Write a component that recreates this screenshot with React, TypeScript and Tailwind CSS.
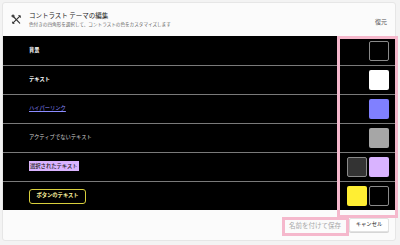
import React from "react";

type Row = {
  key: string;
  swatches: { bg: string; border?: boolean }[];
  label: React.ReactNode;
};

const font = {
  fontFamily: '"Noto Sans CJK JP", "Noto Sans", sans-serif',
};

function PaletteIcon() {
  return (
    <svg width="11" height="11" viewBox="0 0 12 12" fill="none" stroke="#333" strokeWidth="1.2" strokeLinecap="round">
      <path d="M2.8 3 L9.5 10" />
      <circle cx="2.2" cy="2.2" r="1.1" />
      <path d="M10 2 L2 10" />
      <path d="M8.6 1.6 L10.4 3.4" />
      <path d="M1.6 8.8 L3.2 10.4" />
    </svg>
  );
}

const rows: Row[] = [
  {
    key: "bg",
    swatches: [{ bg: "bg-black", border: true }],
    label: <span className="font-bold text-white">背景</span>,
  },
  {
    key: "text",
    swatches: [{ bg: "bg-white" }],
    label: <span className="font-bold text-white">テキスト</span>,
  },
  {
    key: "link",
    swatches: [{ bg: "bg-[#8080ff]" }],
    label: <span className="text-[#8c8cff] underline">ハイパーリンク</span>,
  },
  {
    key: "inactive",
    swatches: [{ bg: "bg-[#a6a6a6]" }],
    label: <span className="text-[#d4d4d4]">アクティブでないテキスト</span>,
  },
  {
    key: "selected",
    swatches: [{ bg: "bg-[#333333]", border: true }, { bg: "bg-[#d9b3ff]" }],
    label: (
      <span className="bg-[#d9b3ff] px-[1px] py-[1px] font-medium text-[#222]">
        選択されたテキスト
      </span>
    ),
  },
  {
    key: "button",
    swatches: [{ bg: "bg-[#ffee33]" }, { bg: "bg-black", border: true }],
    label: (
      <span className="inline-flex h-[15px] w-[57px] items-center justify-center rounded-[3px] border border-[#d8cf3c] font-bold text-[#fff6a0]">
        ボタンのテキスト
      </span>
    ),
  },
];

export default function App() {
  return (
    <div className="h-[245px] w-[400px] bg-[#f3f3f3] p-[2px]" style={font}>
      <div className="relative flex h-[239px] w-[394px] flex-col rounded-[3px] border border-[#e6e6e6] bg-[#fbfbfb]">
        <div className="flex h-[33px] items-center pl-[8px] pr-[8px]">
          <PaletteIcon />
          <div className="ml-[7px] flex flex-1 flex-col leading-none">
            <span className="text-[6.5px] text-[#1a1a1a]">コントラスト テーマの編集</span>
            <span className="mt-[3px] text-[4.6px] text-[#666]">
              色付きの四角形を選択して、コントラストの色をカスタマイズします
            </span>
          </div>
          <span className="mt-[3px] text-[6px] text-[#555]">復元</span>
        </div>

        <div className="flex flex-col bg-black">
          {rows.map((row, i) => (
            <div
              key={row.key}
              className={`flex h-[29px] items-center pl-[26px] pr-[6px] text-[5.3px] ${
                i > 0 ? "border-t border-[#7a7a7a]" : ""
              }`}
            >
              <div className="flex-1 leading-none">{row.label}</div>
              <div className="flex gap-[2px]">
                {row.swatches.map((s, j) => (
                  <div
                    key={j}
                    className={`h-[20px] w-[20px] rounded-[2px] ${s.bg} ${
                      s.border ? "border border-[#8a8a8a]" : ""
                    }`}
                  />
                ))}
              </div>
            </div>
          ))}
        </div>

        <div className="flex flex-1 items-center justify-end gap-[4px] pr-[6px]">
          <button className="h-[12px] w-[60px] rounded-[2px] bg-[#fbfbfb] text-[6.5px] leading-none text-[#a8a8a8]">
            名前を付けて保存
          </button>
          <button className="h-[14px] w-[40px] rounded-[2px] border border-[#e2e2e2] bg-white text-[5.3px] leading-none text-[#1a1a1a] shadow-[0_1px_0_#d6d6d6]">
            キャンセル
          </button>
        </div>

        {/* highlight overlays */}
        <div className="pointer-events-none absolute left-[334px] top-[33px] h-[182px] w-[61px] border-[3px] border-[#f5b8cc]" />
        <div className="pointer-events-none absolute left-[279px] top-[214px] h-[19px] w-[67px] border-[3px] border-[#f5b8cc]" />
      </div>
    </div>
  );
}
